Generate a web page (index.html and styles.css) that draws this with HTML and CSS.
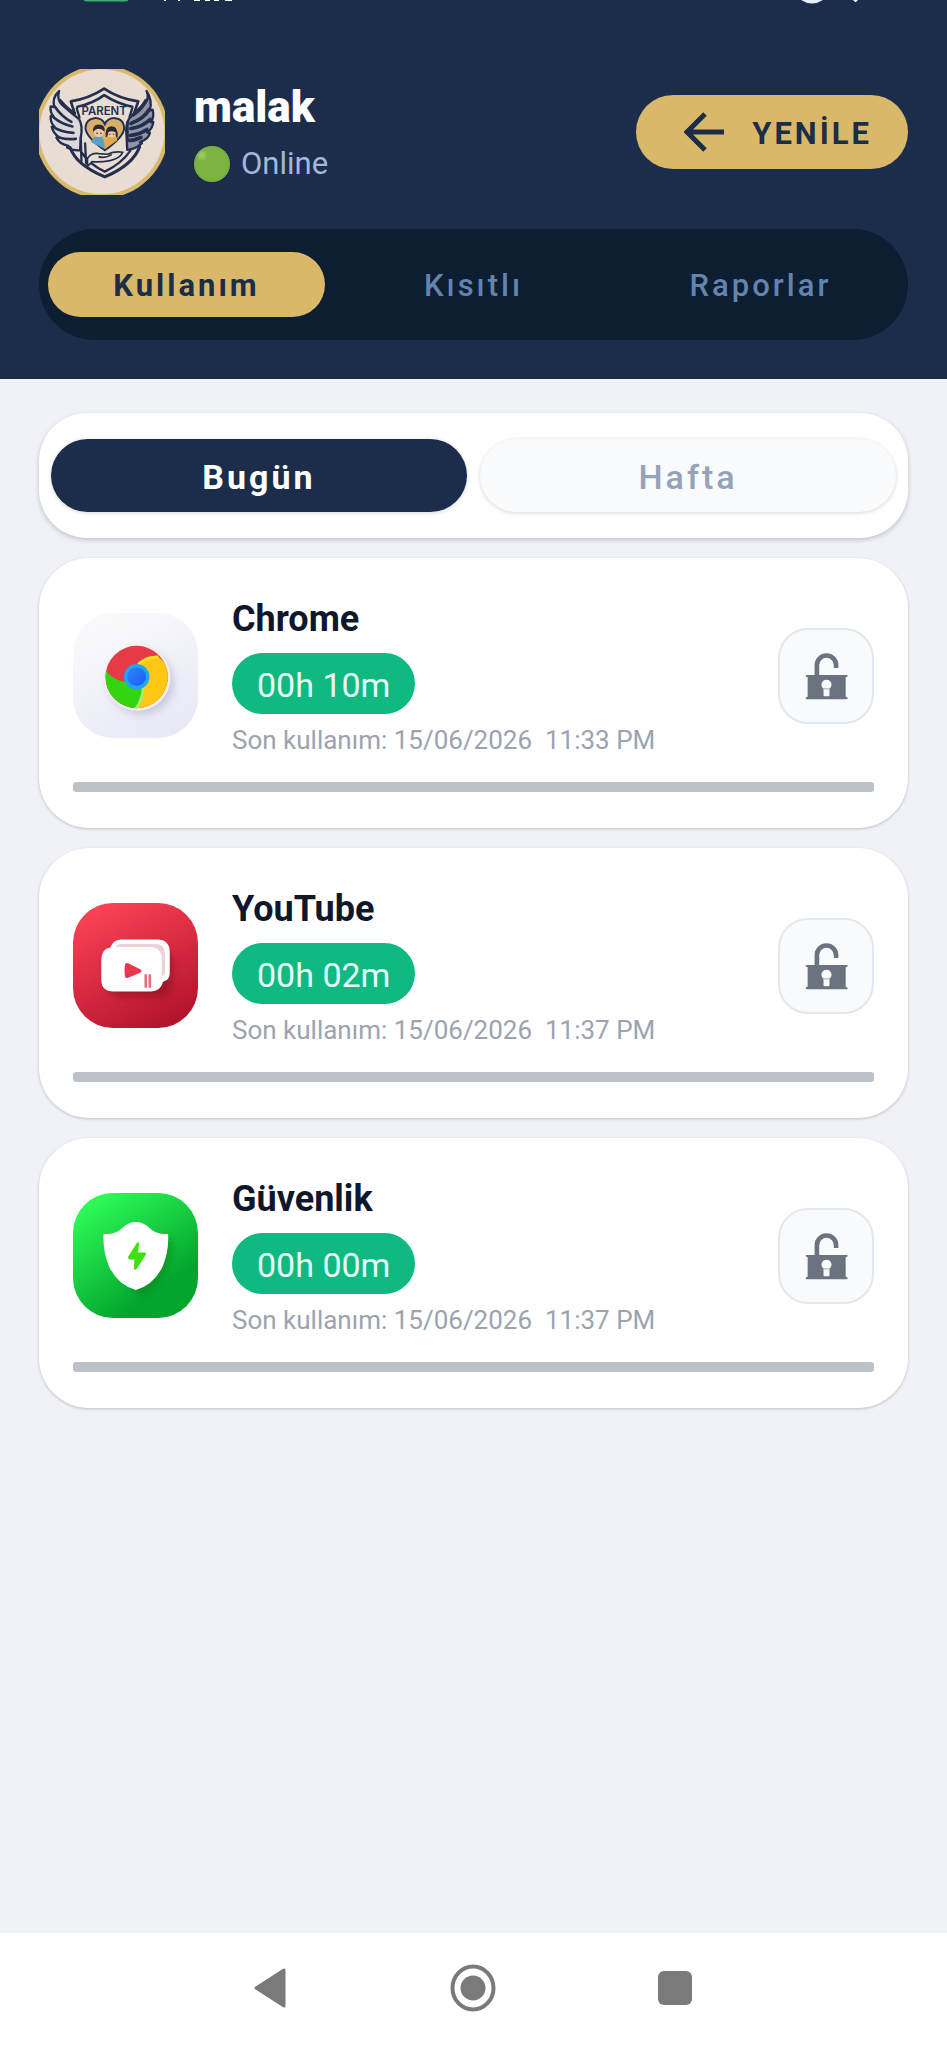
FILE: index.html
```html
<!DOCTYPE html>
<html lang="tr">
<head>
    <meta charset="UTF-8">
    <meta name="viewport" content="width=device-width, initial-scale=1.0">
    <title>malak - Kullanım</title>
    <link rel="stylesheet" href="styles.css">
</head>
<body>
    <!-- Shared icons -->
    <svg class="sprite" width="0" height="0" aria-hidden="true">
        <symbol id="unlock" viewBox="193 297 130 144">
            <path d="M229 370V336a29 29 0 0 1 58 0v9" fill="none" stroke="#6b7280" stroke-width="14"/>
            <path fill="#6b7280" fill-rule="evenodd" d="M198 366h121q3 0 3 3 0 3-6 4v59q6 1 6 4 0 3-3 3H198q-3 0-3-3 0-3 6-4v-59q-6-1-6-4 0-3 3-3zM258 380a15 15 0 0 0-9 27v20q0 3 3 3h12q3 0 3-3v-20a15 15 0 0 0-9-27z"/>
            <path d="M249 408h18" stroke="#a3a9b2" stroke-width="3"/>
        </symbol>
    </svg>

    <header class="header">
        <div class="status-bar">
            <svg width="160" height="4" viewBox="80 0 160 4" aria-hidden="true">
                <path d="M84 0h44q-1 1-3 1H87q-2 0-3-1z" fill="#3fae6d" stroke="#3fae6d"/>
                <path d="M164 0h2M178 0h2M194 0h6M205 0h5M214 0h5M225 0h7" stroke="#fff" stroke-width="2"/>
            </svg>
            <svg width="60" height="4" viewBox="800 0 60 4" aria-hidden="true">
                <path d="M801 0q11 7 22 0z" fill="#e8eefc"/>
                <path d="M853 0h5l-2 2h-1z" fill="#e8eefc"/>
            </svg>
        </div>

        <div class="profile">
            <svg class="avatar" viewBox="25 27 377 377" role="img" aria-label="Parent">
                <circle cx="213" cy="215" r="199" fill="#d9b96a"/>
                <circle cx="213" cy="215" r="187" fill="#e9ddd3"/>
                <g fill="none" stroke="#232f4d" stroke-width="7" stroke-linejoin="round" stroke-linecap="round">
                    <!-- wings -->
                    <path fill="#dcd8da" d="M85 93q-8 25 10 42 28 25 50 42 12 20 5 55l-2 38q-22 2-39-8 2-3 4-5-27-5-36-25l8-1q-18-12-22-31l9 1q-14-15-12-33l9 2q-12-15-9-31l10 2q-6-30 15-48z"/>
                    <path stroke-width="8" d="M72 139q20 30 50 46M69 172q24 20 56 27M72 203q22 13 56 15M85 232q22 7 50 4M88 120q24 28 44 40"/>
                    <path fill="#8e94a5" d="M347 93q10 25-8 40-18 16-44 42-12 20-8 52l2 42q26-2 44-20l-6-3q26-9 30-28l-8-1q16-12 18-32l-8 1q12-15 6-37l-8 2q8-32-10-58z"/>
                    <path stroke-width="11" d="M355 148q-15 27-55 42M357 178q-22 22-57 27M348 208q-20 14-50 18M330 232q-20 9-37 9M345 122q-14 25-38 42"/>
                    <!-- shield -->
                    <path stroke-width="8" d="M132 160l-12-36q54-8 100-38 44 30 102 38l-12 34M140 140q46-10 80-35 38 25 84 35"/>
                    <path d="M138 145l8 27M304 144l-8 26"/>
                    <path stroke-width="9" d="M118 262q18 52 104 88 84-36 104-90"/>
                    <path d="M152 276q22 36 70 58 50-24 76-62M150 232l2 70M163 250l3 60M290 185v50"/>
                    <!-- hand -->
                    <path fill="#e9ddd3" stroke-width="5" d="M170 294q12-17 34-14l26 2q22-10 46-6-10 20-38 25-32 6-54 3-6 8-14 14zM205 290q18 5 36-6"/>
                </g>
                <path d="M222 270q-58-40-58-68 2-26 27-28 22-1 31 18 9-19 31-18 25 2 27 28 0 28-58 68z" fill="#d8b06a" stroke="#232f4d" stroke-width="6"/>
                <path d="M181 246q6-20 26-18 15 0 15 38z" fill="#5ba0c4"/>
                <path d="M222 266q0-34 16-34 18 0 22 8z" fill="#e2a948"/>
                <circle cx="204" cy="216" r="15" fill="#ecc7a6"/>
                <circle cx="242" cy="218" r="14" fill="#ecc7a6"/>
                <path d="M187 216q-3-23 17-23 20 0 17 22-7-9-17-9t-17 10z" fill="#2b2a33"/>
                <path d="M225 232q-4-34 17-34 22 1 18 35-6-1-6-17-12-6-22 0 0 12-7 16z" fill="#2b2a33"/>
                <path d="M196 219h5M208 219h5M235 222h4M246 222h4" stroke="#2b2a33" stroke-width="3"/>
                <text class="avatar-text" x="220" y="166" text-anchor="middle">PARENT</text>
            </svg>
            <div class="profile-info">
                <h1 class="profile-name">malak</h1>
                <p class="profile-status"><span class="dot"></span>Online</p>
            </div>
            <button class="refresh-button" type="button">
                <svg width="40" height="40" viewBox="0 0 40 40" aria-hidden="true">
                    <path d="M40 20H5M21 2L3 20l18 18" fill="none" stroke="#1c2d48" stroke-width="5"/>
                </svg>
                <span class="label">YENİLE</span>
            </button>
        </div>

        <nav class="tabs">
            <button class="tab active" type="button"><span class="label">Kullanım</span></button>
            <button class="tab" type="button"><span class="label">Kısıtlı</span></button>
            <button class="tab" type="button"><span class="label">Raporlar</span></button>
        </nav>
    </header>

    <main class="content">
        <div class="period">
            <button class="period-button active" type="button"><span class="label">Bugün</span></button>
            <button class="period-button" type="button"><span class="label">Hafta</span></button>
        </div>

        <article class="app-card">
            <div class="app-row">
                <svg class="app-icon" viewBox="129 186 373 373" aria-hidden="true">
                    <defs>
                        <linearGradient id="chromeBg" x1="0.2" y1="0" x2="0.7" y2="1">
                            <stop offset="0" stop-color="#fafafd"/>
                            <stop offset="1" stop-color="#e9e9f6"/>
                        </linearGradient>
                        <linearGradient id="chromeBlue" x1="0" y1="0" x2="1" y2="1">
                            <stop offset="0" stop-color="#2c86ff"/>
                            <stop offset="1" stop-color="#1c5df5"/>
                        </linearGradient>
                        <filter id="soft" x="-50%" y="-50%" width="200%" height="200%">
                            <feGaussianBlur stdDeviation="12"/>
                        </filter>
                        <clipPath id="chromeClip"><circle cx="319" cy="377" r="93"/></clipPath>
                    </defs>
                    <rect x="129" y="186" width="373" height="373" rx="120" fill="url(#chromeBg)"/>
                    <circle cx="333" cy="393" r="96" fill="#a9abc8" opacity=".6" filter="url(#soft)"/>
                    <circle cx="321" cy="379" r="99" fill="#f4efe6"/>
                    <g clip-path="url(#chromeClip)">
                        <rect x="220" y="280" width="200" height="200" fill="#e63a48"/>
                        <path d="M220 345q20 42 70 48l49 12q0 40-32 80h-90z" fill="#34d40e"/>
                        <path d="M318 348q18-32 62-34l50 40v90l-60 40h-60q28-36 28-76z" fill="#fdc713"/>
                        <path d="M318 348q20-32 66-31" fill="none" stroke="#ffe11f" stroke-width="8"/>
                        <path d="M338 408q0 35-25 68" fill="none" stroke="#9ef07a" stroke-width="8"/>
                    </g>
                    <circle cx="319" cy="376" r="38" fill="#21a4f5"/>
                    <circle cx="319" cy="376" r="28" fill="url(#chromeBlue)"/>
                </svg>
                <div class="app-info">
                    <h2 class="app-name">Chrome</h2>
                    <span class="app-time"><span class="label">00h 10m</span></span>
                    <p class="app-last">Son kullanım: 15/06/2026&nbsp; 11:33 PM</p>
                </div>
                <button class="lock-button" type="button" aria-label="Chrome kilitle">
                    <svg width="43" height="48" aria-hidden="true"><use href="#unlock"/></svg>
                </button>
            </div>
            <div class="app-bar"></div>
        </article>

        <article class="app-card">
            <div class="app-row">
                <svg class="app-icon" viewBox="38 62 376 376" aria-hidden="true">
                    <defs>
                        <linearGradient id="tubeBg" x1="0.2" y1="0" x2="0.7" y2="1">
                            <stop offset="0" stop-color="#fd4256"/>
                            <stop offset="1" stop-color="#b3142d"/>
                        </linearGradient>
                    </defs>
                    <rect x="38" y="62" width="376" height="376" rx="120" fill="url(#tubeBg)"/>
                    <rect x="142" y="200" width="192" height="142" rx="35" fill="#7d0a1c" opacity=".55" filter="url(#soft)"/>
                    <path d="M183 172h108q38 0 38 38v63q0 20-20 26-8 29-36 29H160q-37 0-37-36v-58q0-34 27-38 10-24 33-24z" fill="#fff"/>
                    <path d="M166 194q3-9 16-9h104q29 0 29 29v53q0 11-10 17v-52q0-38-38-38z" fill="#ecd3d8"/>
                    <path d="M194 249q1-9 10-6l36 18q8 5 0 11l-36 15q-10 3-10-6-2-16 0-32z" fill="#e63950"/>
                    <path d="M257 276v41M269 276v41" stroke="#e0707e" stroke-width="8"/>
                </svg>
                <div class="app-info">
                    <h2 class="app-name">YouTube</h2>
                    <span class="app-time"><span class="label">00h 02m</span></span>
                    <p class="app-last">Son kullanım: 15/06/2026&nbsp; 11:37 PM</p>
                </div>
                <button class="lock-button" type="button" aria-label="YouTube kilitle">
                    <svg width="43" height="48" aria-hidden="true"><use href="#unlock"/></svg>
                </button>
            </div>
            <div class="app-bar"></div>
        </article>

        <article class="app-card">
            <div class="app-row">
                <svg class="app-icon" viewBox="38 60 376 376" aria-hidden="true">
                    <defs>
                        <linearGradient id="safeBg" x1="0.1" y1="0" x2="0.8" y2="1">
                            <stop offset="0.08" stop-color="#2df957"/>
                            <stop offset="0.8" stop-color="#03a52d"/>
                        </linearGradient>
                    </defs>
                    <rect x="38" y="60" width="376" height="376" rx="120" fill="url(#safeBg)"/>
                    <path d="M155 200h180q0 120-88 170-80-40-92-170z" fill="#0b7a12" opacity=".5" filter="url(#soft)"/>
                    <path d="M130 183q35 3 56-18 19-18 41-18t41 18q22 21 56 18 3 50-16 97-26 56-81 72-55-16-81-72-19-47-16-97z" fill="#fff"/>
                    <path d="M231 209q5-2 6 3l-4 27h21q6 1 3 7l-27 42q-7 6-9-1l2-27h-15q-6-2-4-8z" fill="#3fe010"/>
                </svg>
                <div class="app-info">
                    <h2 class="app-name">Güvenlik</h2>
                    <span class="app-time"><span class="label">00h 00m</span></span>
                    <p class="app-last">Son kullanım: 15/06/2026&nbsp; 11:37 PM</p>
                </div>
                <button class="lock-button" type="button" aria-label="Güvenlik kilitle">
                    <svg width="43" height="48" aria-hidden="true"><use href="#unlock"/></svg>
                </button>
            </div>
            <div class="app-bar"></div>
        </article>
    </main>

    <footer class="system-nav">
        <button type="button" aria-label="Geri">
            <svg width="48" height="48" viewBox="0 0 48 48" aria-hidden="true">
                <path d="M8 24L36 6v36z" fill="#7a7a7a" stroke="#7a7a7a" stroke-width="3" stroke-linejoin="round"/>
            </svg>
        </button>
        <button type="button" aria-label="Ana ekran">
            <svg width="48" height="48" viewBox="0 0 48 48" aria-hidden="true">
                <ellipse cx="23" cy="24" rx="20.5" ry="21.5" fill="none" stroke="#7a7a7a" stroke-width="4"/>
                <circle cx="23" cy="24" r="12.5" fill="#7a7a7a"/>
            </svg>
        </button>
        <button type="button" aria-label="Son uygulamalar">
            <svg width="48" height="48" viewBox="0 0 48 48" aria-hidden="true">
                <rect x="6" y="7" width="34" height="34" rx="6" fill="#7a7a7a"/>
            </svg>
        </button>
    </footer>
</body>
</html>
```
FILE: styles.css
```css
* {
    box-sizing: border-box;
}
body {
    margin: 0;
    min-height: 100vh;
    display: flex;
    flex-direction: column;
    font-family: Roboto, "Noto Sans", sans-serif;
    background: #eff3f8;
    color: #0f172a;
}
h1, h2, p {
    margin: 0;
}
button {
    border: none;
    padding: 0;
    font-family: inherit;
    cursor: pointer;
}
.sprite {
    position: absolute;
}
.label {
    padding-top: 2px;
}

/* Header */
.header {
    background: #1b2d4a;
    padding: 0 39px 39px;
}
.status-bar {
    display: flex;
    justify-content: space-between;
    height: 69px;
    padding: 0 48px 0 41px;
}
.profile {
    display: flex;
    align-items: center;
    gap: 29px;
}
.avatar {
    width: 126px;
    height: 126px;
    flex-shrink: 0;
}
.avatar-text {
    font-family: Inter, sans-serif;
    font-size: 34px;
    font-weight: 600;
    fill: #232f4d;
}
.profile-info {
    flex: 1;
}
.profile-name {
    font-size: 44px;
    line-height: 64px;
    font-weight: 900;
    color: #fff;
}
.profile-status {
    display: flex;
    align-items: center;
    gap: 11px;
    font-size: 31px;
    line-height: 50px;
    color: #a3b8d9;
}
.dot {
    width: 36px;
    height: 36px;
    border-radius: 50%;
    background: radial-gradient(circle at 22% 26%, #a5cf70 0, #7cb342 16%);
    box-shadow: inset 0 0 2px #689f38;
}
.refresh-button {
    display: flex;
    align-items: center;
    gap: 28px;
    height: 74px;
    padding: 0 36px 0 48px;
    border-radius: 37px;
    background: #d9b86a;
    color: #1c2d48;
    font-size: 31px;
    font-weight: 700;
    letter-spacing: 3px;
}
.tabs {
    display: grid;
    grid-template-columns: repeat(3, 1fr);
    gap: 10px;
    margin-top: 34px;
    padding: 23px 9px;
    border-radius: 56px;
    background: #0d1d32;
}
.tab {
    display: flex;
    align-items: center;
    justify-content: center;
    height: 65px;
    border-radius: 33px;
    background: transparent;
    color: #6484ad;
    font-size: 31px;
    font-weight: 500;
    letter-spacing: 3px;
}
.tab.active {
    background: #d9b86a;
    color: #1c2d48;
    font-weight: 700;
}

/* Content */
.content {
    flex: 1;
    display: flex;
    flex-direction: column;
    gap: 20px;
    padding: 34px 39px;
}
.period {
    display: grid;
    grid-template-columns: 1fr 1fr;
    gap: 13px;
    padding: 26px 12px;
    border-radius: 48px;
    background: #fff;
    box-shadow: 0 2px 5px rgba(0,0,0,0.2);
}
.period-button {
    display: flex;
    align-items: center;
    justify-content: center;
    height: 73px;
    border-radius: 37px;
    background: #f8fafc;
    box-shadow: 0 1px 4px rgba(0,0,0,0.16);
    color: #94a3b8;
    font-size: 34px;
    font-weight: 500;
    letter-spacing: 3px;
}
.period-button.active {
    background: #1b2d4a;
    color: #fff;
    font-weight: 700;
}
.app-card {
    padding: 36px 34px;
    border-radius: 50px;
    background: #fff;
    box-shadow: 0 1px 3px rgba(0,0,0,0.22);
}
.app-row {
    display: flex;
    align-items: center;
}
.app-icon {
    width: 125px;
    height: 125px;
    flex-shrink: 0;
}
.app-info {
    flex: 1;
    margin-left: 34px;
}
.app-name {
    font-size: 36px;
    line-height: 50px;
    font-weight: 700;
}
.app-time {
    display: flex;
    align-items: center;
    width: fit-content;
    height: 61px;
    margin: 9px 0;
    padding: 0 25px;
    border-radius: 31px;
    background: #10b981;
    color: #e6fff6;
    font-size: 34px;
}
.app-last {
    font-size: 26px;
    line-height: 34px;
    color: #9ca3af;
}
.lock-button {
    display: flex;
    align-items: center;
    justify-content: center;
    width: 96px;
    height: 96px;
    border: 2px solid #e2e8f0;
    border-radius: 30px;
    background: #f8fafc;
}
.app-bar {
    height: 10px;
    margin-top: 25px;
    border-radius: 3px;
    background: #bcc2c8;
}

/* System navigation */
.system-nav {
    display: flex;
    justify-content: center;
    height: 115px;
    padding-bottom: 6px;
    background: #fff;
}
.system-nav button {
    display: flex;
    align-items: center;
    justify-content: center;
    width: 202px;
    background: none;
}
```
